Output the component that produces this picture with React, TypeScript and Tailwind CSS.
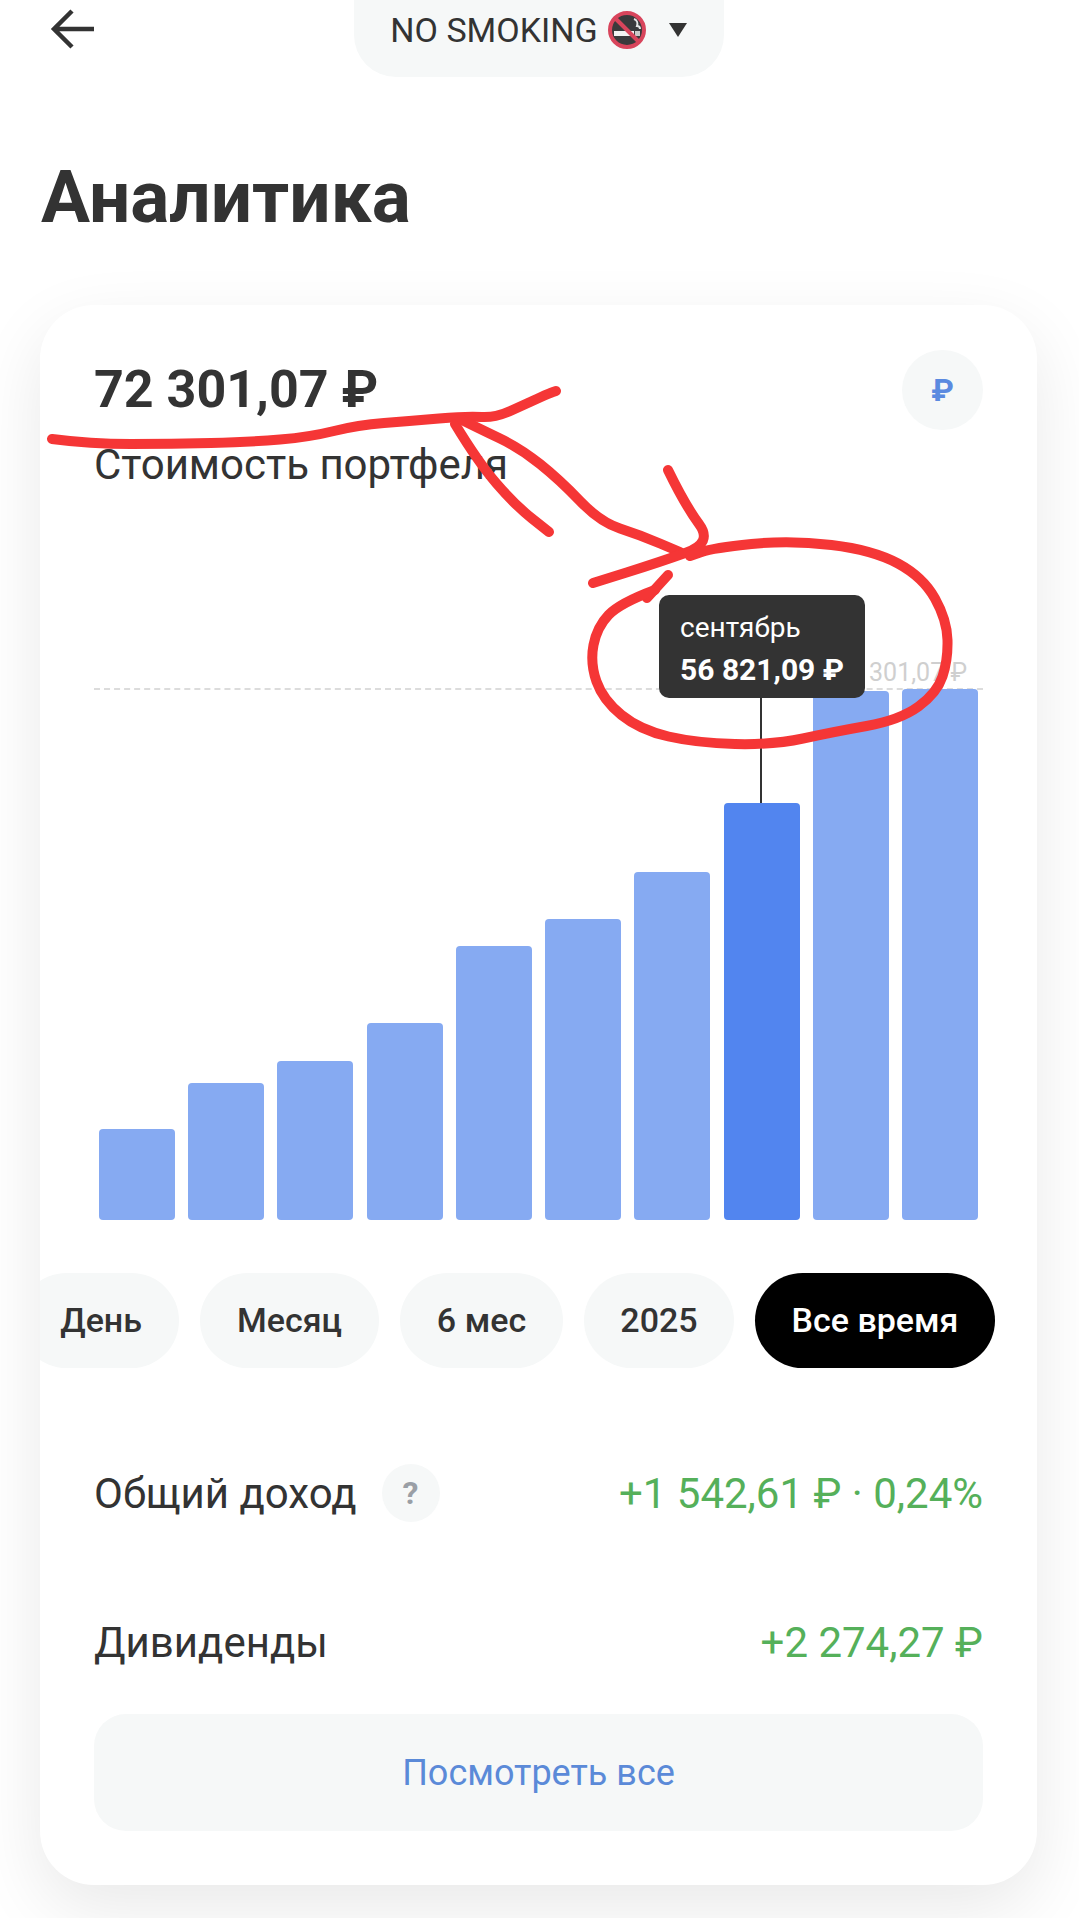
import React from 'react';

const bars = [91, 137, 159, 197, 274, 301, 348, 417, 529, 531];
const periods = ['День', 'Месяц', '6 мес', '2025'];

// hand-drawn red marker strokes, page coordinates
const strokes: [number, number][][] = [
  [[52, 439], [90, 444], [172, 444], [250, 442], [310, 437], [358, 425], [410, 421], [468, 416], [495, 418], [530, 402], [550, 393], [556, 391]],
  [[455, 424], [478, 462], [515, 505], [549, 532]],
  [[462, 420], [478, 428], [520, 448], [560, 480], [600, 522], [640, 535], [680, 552]],
  [[668, 470], [685, 505], [713, 543], [660, 562], [593, 583]],
  [[647, 598], [668, 575]],
  [[655, 590], [620, 603], [597, 627], [590, 663], [603, 700], [640, 730], [697, 743], [773, 745], [833, 732], [900, 720], [937, 693], [948, 660], [947, 620], [923, 577], [873, 550], [790, 540], [713, 548], [690, 556]],
];

function smooth(pts: [number, number][]) {
  let d = `M${pts[0][0]} ${pts[0][1]}`;
  for (let i = 1; i < pts.length - 1; i++) {
    const mx = (pts[i][0] + pts[i + 1][0]) / 2;
    const my = (pts[i][1] + pts[i + 1][1]) / 2;
    d += ` Q${pts[i][0]} ${pts[i][1]} ${mx} ${my}`;
  }
  const last = pts[pts.length - 1];
  return d + ` L${last[0]} ${last[1]}`;
}

function NoSmoking() {
  return (
    <svg width="38" height="38" viewBox="0 0 38 38">
      <circle cx="19" cy="19" r="17" fill="#3a3a3c" stroke="#d8455c" strokeWidth="4" />
      <rect x="6" y="20" width="20" height="5" fill="#f2f2f2" />
      <rect x="27" y="20" width="5" height="5" fill="#c9c9c9" />
      <path d="M26 8c3 1 4 4 3 7 2 0 3 1 3 3" fill="none" stroke="#e6e6e6" strokeWidth="2" />
      <path d="M7 7 31 31" stroke="#d8455c" strokeWidth="4" />
    </svg>
  );
}

export default function App() {
  return (
    <div
      className="relative h-[1918px] w-[1079px] overflow-hidden bg-white text-[#333333]"
      style={{ fontFamily: 'Roboto, sans-serif' }}
    >
      {/* Top bar */}
      <div className="relative flex h-[77px] justify-center pr-[2px]">
        <svg className="absolute left-[50px] top-[8px]" width="46" height="42" viewBox="0 0 46 42" fill="none">
          <path d="M44 21H5M22 3 4 21l18 18" stroke="#333333" strokeWidth="4.5" />
        </svg>
        <div className="flex w-[370px] items-center justify-center rounded-b-[42px] bg-[#f6f8f8] pb-[17px]">
          <span className="whitespace-nowrap text-[34px] leading-[38px]">NO SMOKING</span>
          <span className="ml-[10px]"><NoSmoking /></span>
          <span className="ml-[23px] h-0 w-0 border-x-[9px] border-t-[14px] border-x-transparent border-t-[#333333]" />
        </div>
      </div>

      <h1 className="ml-[41px] mt-[80px] mb-[68px] text-[73px] font-bold leading-[80px]">Аналитика</h1>

      {/* Card */}
      <div className="ml-[40px] h-[1580px] w-[997px] rounded-[54px] bg-white px-[54px] pt-[45px] shadow-[0_24px_70px_rgba(0,0,0,0.09)]">
        <div className="flex h-[80px] items-center justify-between">
          <div className="text-[52px] font-bold leading-[80px]">72 301,07 ₽</div>
          <div className="flex h-[80px] w-[81px] items-center justify-center rounded-full bg-[#f6f8f8] text-[32px] font-bold text-[#5b8ae0]">₽</div>
        </div>
        <div className="mt-[10px] text-[42px] leading-[50px]">Стоимость портфеля</div>

        {/* Chart */}
        <div className="relative mt-[198px] flex h-[532px] items-end justify-between px-[5px]">
          <div className="absolute inset-x-0 top-0 border-t-2 border-dashed border-[#dcdcdc]" />
          <div className="absolute right-[16px] top-[-30px] text-[25px] leading-[30px] text-[#cfcfcf]">72 301,07 ₽</div>
          {bars.map((h, i) => (
            <div
              key={i}
              className={`relative w-[76px] rounded-[4px] ${i === 7 ? 'bg-[#5285ef]' : 'bg-[#86aaf2]'}`}
              style={{ height: h }}
            />
          ))}
          <div className="absolute left-[666px] top-[10px] h-[105px] w-[2px] bg-[#333333]" />
          <div className="absolute left-[565px] top-[-93px] h-[103px] w-[206px] rounded-[10px] bg-[#333333] px-[21px] pt-[16px] text-white">
            <div className="text-[28px] leading-[34px]">сентябрь</div>
            <div className="mt-[8px] whitespace-nowrap text-[30px] font-bold leading-[34px]">56 821,09 ₽</div>
          </div>
        </div>

        {/* Period pills */}
        <div className="-mx-[54px] mt-[53px] flex h-[95px] justify-end gap-[21px] overflow-hidden pr-[42px] text-[34px] font-medium">
          <div className="flex w-[160px] shrink-0 items-center justify-end rounded-full bg-[#f6f8f8] pr-[37px]">{periods[0]}</div>
          <div className="flex w-[179px] shrink-0 items-center justify-center rounded-full bg-[#f6f8f8]">{periods[1]}</div>
          <div className="flex w-[163px] shrink-0 items-center justify-center rounded-full bg-[#f6f8f8]">{periods[2]}</div>
          <div className="flex w-[150px] shrink-0 items-center justify-center rounded-full bg-[#f6f8f8]">{periods[3]}</div>
          <div className="flex w-[240px] shrink-0 items-center justify-center rounded-full bg-black text-white">Все время</div>
        </div>

        {/* Totals */}
        <div className="mt-[96px] flex h-[58px] items-center justify-between text-[42px]">
          <div className="flex items-center">
            <span>Общий доход</span>
            <span className="ml-[25px] flex h-[58px] w-[58px] items-center justify-center rounded-full bg-[#f6f8f8] text-[32px] font-bold text-[#9a9fa6]">?</span>
          </div>
          <span className="text-[#55b05a]">+1 542,61 ₽ · 0,24%</span>
        </div>
        <div className="mt-[91px] flex h-[58px] items-center justify-between text-[42px]">
          <span>Дивиденды</span>
          <span className="text-[#55b05a]">+2 274,27 ₽</span>
        </div>
        <button className="mt-[43px] flex h-[117px] w-full items-center justify-center rounded-[32px] bg-[#f6f8f8] text-[36px] text-[#5b8ad8]">
          Посмотреть все
        </button>
      </div>

      {/* Red marker annotation on top of the screenshot */}
      <svg className="pointer-events-none absolute inset-0" width="1079" height="1918" fill="none">
        {strokes.map((s, i) => (
          <path key={i} d={smooth(s)} stroke="#f53636" strokeWidth="10" strokeLinecap="round" strokeLinejoin="round" />
        ))}
      </svg>
    </div>
  );
}
